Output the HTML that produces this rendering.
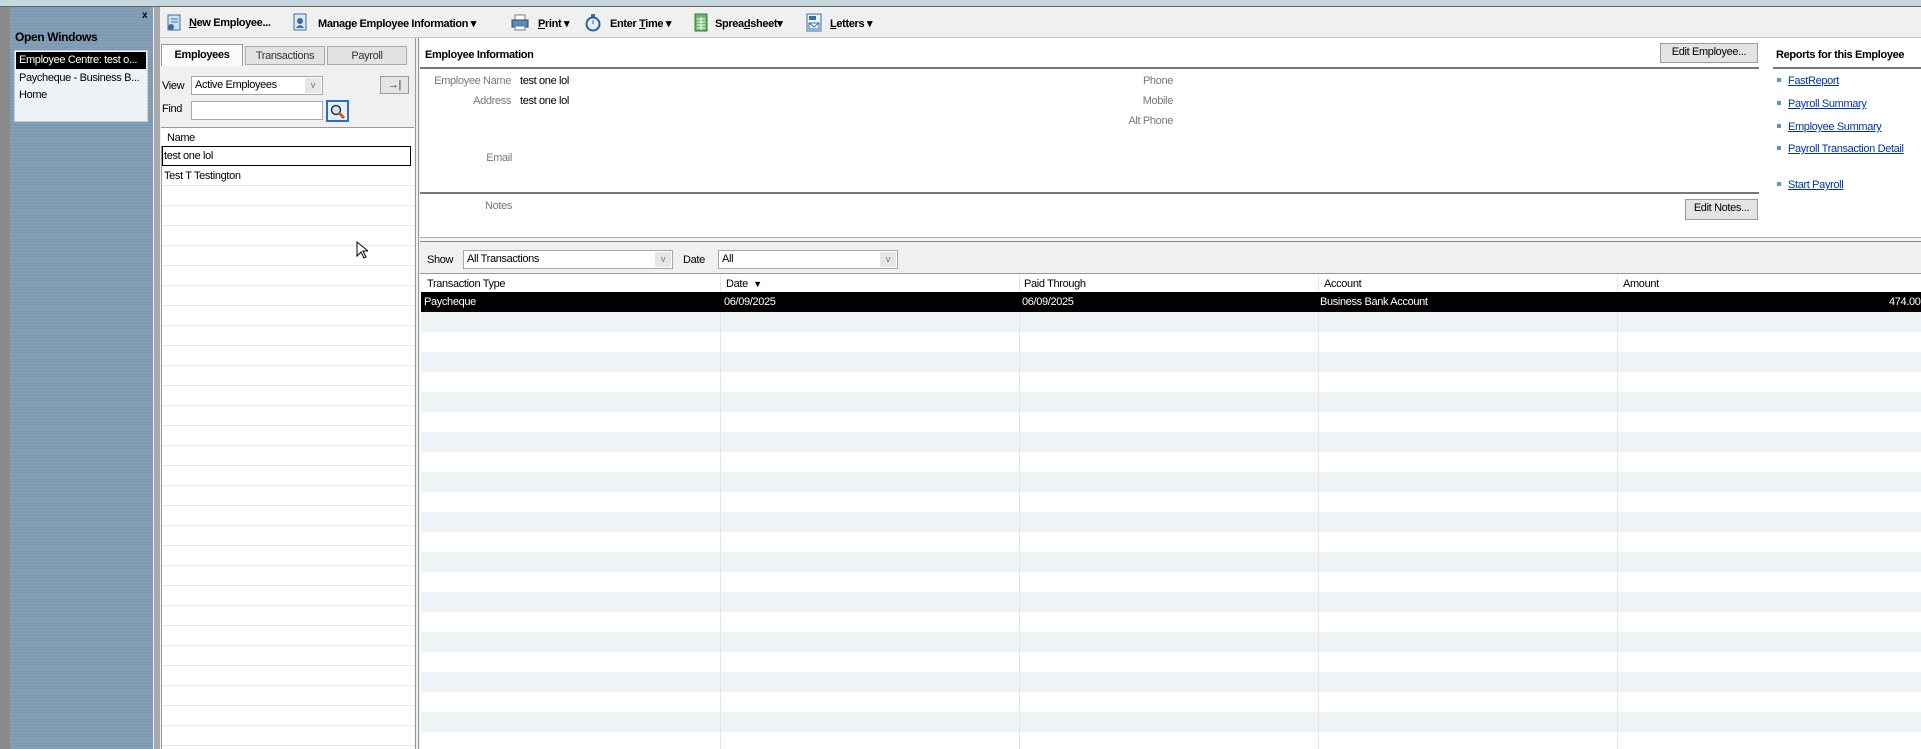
<!DOCTYPE html>
<html><head><meta charset="utf-8"><style>
*{margin:0;padding:0;box-sizing:border-box}
body{width:1921px;height:749px;overflow:hidden;background:#f0f0f0;font-family:"Liberation Sans",sans-serif;font-size:11px;letter-spacing:-0.35px;color:#000;position:relative}
.a{position:absolute;white-space:nowrap}
.b{font-weight:bold}
.lbl{color:#777;text-align:right}
a{color:#0033aa;text-decoration:underline}
.btn{position:absolute;background:#e4e4e4;border:1px solid #9a9a9a;text-align:center;line-height:17px}
.combo{position:absolute;background:#fff;border:1px solid #a8a8a8;padding-left:3px;line-height:17px}
.combo i{position:absolute;right:1px;top:1px;width:16px;height:15px;background:#e6e6e6;font-style:normal;color:#777;font-size:9px;text-align:center;line-height:15px}
</style></head><body>
<div class="a" style="left:0;top:0;width:1921px;height:7px;background:#c6d7dd;border-bottom:1px solid #666"></div>
<div class="a" style="left:0;top:7px;width:10px;height:742px;background:#8a8a8a"></div>
<div class="a" style="left:10px;top:7px;width:144px;height:742px;background:repeating-linear-gradient(#7e9ab2 0 2px,#87a1b8 2px 3px);border-right:1px solid #e8eef2"></div>
<div class="a b" style="left:142px;top:10px;color:#000;font-size:10px">x</div>
<div class="a b" style="left:15px;top:30px;font-size:12px">Open Windows</div>
<div class="a" style="left:14px;top:50px;width:134px;height:72px;background:#edf2f6;border:1px solid #ccd"></div>
<div class="a" style="left:16px;top:52px;width:130px;height:17px;background:#000;color:#fff;padding-left:3px;line-height:17px">Employee Centre: test o...</div>
<div class="a" style="left:19px;top:70px;line-height:17px">Paycheque - Business B...</div>
<div class="a" style="left:19px;top:87px;line-height:17px">Home</div>
<div class="a" style="left:154px;top:7px;width:6px;height:742px;background:#a9a9a9"></div>
<div class="a" style="left:160px;top:7px;width:1761px;height:31px;background:#f0f0f0;border-bottom:1px solid #c8c8c8"></div>
<svg class="a" style="left:166px;top:14px" width="16" height="18"><rect x="2" y="1" width="12" height="15" fill="#cfe0f2" stroke="#3a6ea8"/><line x1="5" y1="5" x2="12" y2="5" stroke="#3a6ea8"/><line x1="5" y1="8" x2="12" y2="8" stroke="#3a6ea8"/><circle cx="5" cy="13" r="3" fill="#3a6ea8"/></svg>
<div class="a b" style="left:189px;top:17px"><u>N</u>ew Employee...</div>
<svg class="a" style="left:292px;top:13px" width="16" height="19"><rect x="2" y="1" width="12" height="16" fill="#dde8f4" stroke="#3a6ea8"/><circle cx="8" cy="8" r="3" fill="#3a6ea8"/><path d="M4 15q4-6 8 0" fill="#3a6ea8"/></svg>
<div class="a b" style="left:318px;top:17px">Manage Employee Information ▾</div>
<svg class="a" style="left:511px;top:14px" width="18" height="17"><rect x="4" y="1" width="10" height="5" fill="#fff" stroke="#777"/><rect x="1" y="6" width="16" height="7" fill="#5a88c0" stroke="#345"/><rect x="4" y="12" width="10" height="4" fill="#fff" stroke="#777"/></svg>
<div class="a b" style="left:538px;top:17px"><u>P</u>rint ▾</div>
<svg class="a" style="left:585px;top:13px" width="16" height="19"><rect x="6" y="1" width="4" height="3" fill="#3a6ea8"/><circle cx="8" cy="11" r="6.5" fill="#e8f0fa" stroke="#2a5ea8" stroke-width="2"/><line x1="8" y1="11" x2="8" y2="7" stroke="#2a5ea8"/></svg>
<div class="a b" style="left:610px;top:17px">Enter <u>T</u>ime ▾</div>
<svg class="a" style="left:694px;top:13px" width="14" height="19"><rect x="1" y="1" width="12" height="17" fill="#6fb56f" stroke="#2f7a2f"/><path d="M3 6h8M3 9h8M3 12h8M3 15h8M7 4v13" stroke="#fff"/></svg>
<div class="a b" style="left:715px;top:17px">Sprea<u>d</u>sheet▾</div>
<svg class="a" style="left:806px;top:13px" width="16" height="19"><rect x="1" y="1" width="14" height="17" fill="#eaf1fa" stroke="#3a6ea8"/><rect x="3" y="3" width="7" height="4" fill="#3a6ea8"/><path d="M3 10h10v6H3zM3 10l5 4 5-4" fill="none" stroke="#3a6ea8"/></svg>
<div class="a b" style="left:830px;top:17px"><u>L</u>etters ▾</div>

<div class="a" style="left:160px;top:38px;width:259px;height:711px;background:#f0f0f0;border-right:4px double #999"></div>
<div class="a" style="left:161px;top:44px;width:82px;height:22px;background:#fafafa;border:1px solid #999;border-bottom:none;text-align:center;line-height:21px;font-weight:bold">Employees</div>
<div class="a" style="left:245px;top:46px;width:80px;height:19px;background:#e2e2e2;border:1px solid #aaa;text-align:center;line-height:18px;color:#333">Transactions</div>
<div class="a" style="left:327px;top:46px;width:80px;height:19px;background:#e2e2e2;border:1px solid #aaa;text-align:center;line-height:18px;color:#333">Payroll</div>
<div class="a" style="left:162px;top:80px">View</div>
<div class="combo" style="left:191px;top:76px;width:132px;height:19px">Active Employees<i>v</i></div>
<div class="btn" style="left:380px;top:76px;width:29px;height:18px;line-height:16px;color:#333">→|</div>
<div class="a" style="left:162px;top:103px">Find</div>
<div class="combo" style="left:191px;top:101px;width:132px;height:19px"></div>
<div class="a" style="left:326px;top:100px;width:23px;height:22px;border:2px solid #2a6ed0;background:#e8f0fa"></div>
<svg class="a" style="left:329px;top:103px" width="17" height="17"><circle cx="7" cy="7" r="4.5" fill="#cfe4f7" stroke="#333" stroke-width="1.5"/><line x1="10" y1="10" x2="15" y2="15" stroke="#c0602a" stroke-width="3"/></svg>
<div class="a" style="left:161px;top:127px;width:253px;height:622px;background:repeating-linear-gradient(#fff 0 19px,#e8e8e8 19px 20px);background-position:0 -2px;border-top:1px solid #999;border-left:1px solid #999"></div>
<div class="a" style="left:161px;top:128px;width:253px;height:18px;background:#fff"></div>
<div class="a" style="left:167px;top:132px">Name</div>
<div class="a" style="left:162px;top:146px;width:249px;height:20px;border:1px solid #000;background:#fff;line-height:18px;padding-left:1px">test one lol</div>
<div class="a" style="left:164px;top:170px">Test T Testington</div>
<svg class="a" style="left:356px;top:241px" width="12" height="18"><path d="M1 1v14l4-4 3 6 2-1-3-6h5z" fill="#fff" stroke="#000"/></svg>

<div class="a" style="left:420px;top:38px;width:1501px;height:199px;background:#fff"></div>
<div class="a b" style="left:425px;top:49px">Employee Information</div>
<div class="btn" style="left:1660px;top:43px;width:98px;height:20px">Edit Employee...</div>
<div class="a" style="left:420px;top:67px;width:1339px;height:2px;background:#777"></div>
<div class="a b" style="left:1776px;top:49px">Reports for this Employee</div>
<div class="a" style="left:1773px;top:67px;width:148px;height:2px;background:#777"></div>
<div class="a lbl" style="left:400px;top:75px;width:111px">Employee Name</div>
<div class="a" style="left:520px;top:75px">test one lol</div>
<div class="a lbl" style="left:400px;top:95px;width:111px">Address</div>
<div class="a" style="left:520px;top:95px">test one lol</div>
<div class="a lbl" style="left:400px;top:152px;width:112px">Email</div>
<div class="a lbl" style="left:1060px;top:75px;width:113px">Phone</div>
<div class="a lbl" style="left:1060px;top:95px;width:113px">Mobile</div>
<div class="a lbl" style="left:1060px;top:115px;width:113px">Alt Phone</div>
<div class="a" style="left:420px;top:192px;width:1339px;height:2px;background:#777"></div>
<div class="a lbl" style="left:400px;top:200px;width:112px">Notes</div>
<div class="btn" style="left:1685px;top:199px;width:73px;height:21px">Edit Notes...</div>
<div class="a" style="left:1777px;top:78px;width:4px;height:4px;background:#5a9aa8"></div>
<div class="a" style="left:1788px;top:75px"><a>FastReport</a></div>
<div class="a" style="left:1777px;top:101px;width:4px;height:4px;background:#5a9aa8"></div>
<div class="a" style="left:1788px;top:98px"><a>Payroll Summary</a></div>
<div class="a" style="left:1777px;top:124px;width:4px;height:4px;background:#5a9aa8"></div>
<div class="a" style="left:1788px;top:121px"><a>Employee Summary</a></div>
<div class="a" style="left:1777px;top:146px;width:4px;height:4px;background:#5a9aa8"></div>
<div class="a" style="left:1788px;top:143px"><a>Payroll Transaction Detail</a></div>
<div class="a" style="left:1777px;top:182px;width:4px;height:4px;background:#5a9aa8"></div>
<div class="a" style="left:1788px;top:179px"><a>Start Payroll</a></div>
<div class="a" style="left:420px;top:237px;width:1501px;height:5px;border-top:1px solid #aaa;border-bottom:1px solid #888;background:#f4f4f4"></div>

<div class="a" style="left:427px;top:254px">Show</div>
<div class="combo" style="left:463px;top:250px;width:210px;height:19px">All Transactions<i>v</i></div>
<div class="a" style="left:683px;top:254px">Date</div>
<div class="combo" style="left:718px;top:250px;width:180px;height:19px">All<i>v</i></div>
<div class="a" style="left:420px;top:273px;width:1501px;height:1px;background:#999"></div>
<div class="a" style="left:420px;top:274px;width:1501px;height:475px;background:#fff"></div>
<div class="a" style="left:421px;top:312px;width:1500px;height:437px;background:repeating-linear-gradient(#eef3f7 0 20px,#fff 20px 40px)"></div>
<div class="a" style="left:720px;top:275px;width:1px;height:474px;background:#e6e6e6"></div>
<div class="a" style="left:1019px;top:275px;width:1px;height:474px;background:#e6e6e6"></div>
<div class="a" style="left:1318px;top:275px;width:1px;height:474px;background:#e6e6e6"></div>
<div class="a" style="left:1617px;top:275px;width:1px;height:474px;background:#e6e6e6"></div>
<div class="a" style="left:427px;top:278px">Transaction Type</div>
<div class="a" style="left:726px;top:278px">Date &nbsp;<span style="font-size:9px">▼</span></div>
<div class="a" style="left:1024px;top:278px">Paid Through</div>
<div class="a" style="left:1324px;top:278px">Account</div>
<div class="a" style="left:1623px;top:278px">Amount</div>
<div class="a" style="left:421px;top:292px;width:1500px;height:20px;background:#000;color:#fff;line-height:20px">
<span class="a" style="left:3px">Paycheque</span><span class="a" style="left:303px">06/09/2025</span><span class="a" style="left:601px">06/09/2025</span><span class="a" style="left:899px">Business Bank Account</span><span class="a" style="left:1468px">474.00</span></div>
</body></html>
